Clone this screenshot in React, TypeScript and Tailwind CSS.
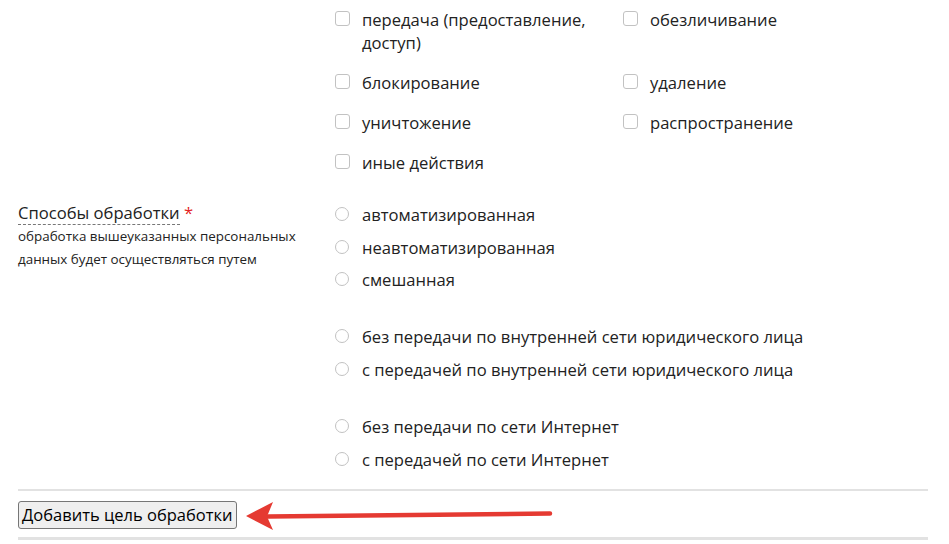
import type React from "react"

const font = { fontFamily: '"Open Sans", "Noto Sans", sans-serif' }

function Check({ children }: { children: React.ReactNode }) {
  return (
    <label className="flex items-start mb-[17px] text-[16.6px] leading-[23px] text-[#222]">
      <span className="mt-[3px] w-[15px] h-[15px] shrink-0 rounded-[3px] border border-[#c2c2c2] bg-white" />
      <span className="ml-[12px] pr-4">{children}</span>
    </label>
  )
}

function Radio({ children }: { children: React.ReactNode }) {
  return (
    <label className="flex items-start text-[16.6px] leading-[23px] text-[#222]">
      <span className="mt-[4px] w-[14px] h-[14px] shrink-0 rounded-full border border-[#c2c2c2] bg-white" />
      <span className="ml-[13px]">{children}</span>
    </label>
  )
}

const checks: [string, string | null][] = [
  ["передача (предоставление, доступ)", "обезличивание"],
  ["блокирование", "удаление"],
  ["уничтожение", "распространение"],
  ["иные действия", null],
]

const groups = [
  ["автоматизированная", "неавтоматизированная", "смешанная"],
  ["без передачи по внутренней сети юридического лица", "с передачей по внутренней сети юридического лица"],
  ["без передачи по сети Интернет", "с передачей по сети Интернет"],
]

export default function App() {
  return (
    <div className="relative w-[949px] h-[544px] overflow-hidden bg-white pl-[18px] pr-[21px]" style={font}>
      {/* действия с данными */}
      <div className="flex pt-[8px]">
        <div className="w-[317px] shrink-0" />
        <div className="grid grid-cols-[288px_288px]">
          {checks.map(([a, b], i) => (
            <div key={i} className="contents">
              <Check>{a}</Check>
              {b ? <Check>{b}</Check> : <div />}
            </div>
          ))}
        </div>
      </div>

      {/* способы обработки */}
      <div className="flex mt-[10px]">
        <div className="w-[317px] shrink-0">
          <div className="text-[16.6px] leading-[23px] text-[#222]">
            <span className="border-b border-dashed border-[#777]">Способы обработки</span>{" "}
            <span className="text-[#e31e24]">*</span>
          </div>
          <div className="mt-[1px] text-[13.4px] leading-[23px] text-[#222] pr-4">
            обработка вышеуказанных персональных данных будет осуществляться путем
          </div>
        </div>
        <div className="pt-[2px]">
          {groups.map((g, gi) => (
            <div key={gi} className={`flex flex-col gap-[9.7px] ${gi > 0 ? "mt-[34px]" : ""}`}>
              {g.map((t) => (
                <Radio key={t}>{t}</Radio>
              ))}
            </div>
          ))}
        </div>
      </div>

      <div className="mt-[18px] h-[2px] bg-[#e2e2e2]" />
      <div className="pt-[10px] pb-[8px]">
        <button
          className="block h-[28px] px-[3px] text-[16.5px] leading-[20px] text-black bg-[#efefef] border border-[#767676] rounded-[3px]"
          style={font}
        >
          Добавить цель обработки
        </button>
      </div>
      <div className="h-[3px] bg-[#e2e2e2]" />

      {/* стрелка-указатель */}
      <svg className="absolute left-[240px] top-[498px]" width="320" height="36" viewBox="0 0 320 36">
        <path d="M310 15.5 L28 18.5" stroke="#e53a32" strokeWidth="4.5" strokeLinecap="round" fill="none" />
        <path d="M6 18 L33 4 L27 18.5 L33 32 Z" fill="#e53a32" />
      </svg>
    </div>
  )
}
